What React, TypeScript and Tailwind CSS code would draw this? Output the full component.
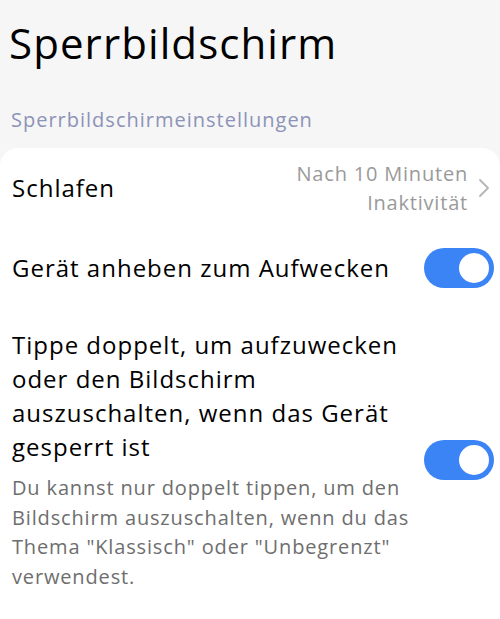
import React from "react";

function Toggle() {
  return (
    <div className="relative h-[40px] w-[70px] shrink-0 rounded-full bg-[#3b84f6]">
      <div className="absolute right-[5px] top-[5px] h-[30px] w-[30px] rounded-full bg-white" />
    </div>
  );
}

export default function App() {
  return (
    <div
      className="flex h-[619px] w-[500px] flex-col overflow-hidden bg-[#f6f6f6]"
      style={{ fontFamily: "'Open Sans', 'Noto Sans', sans-serif" }}
    >
      <h1 className="pl-[9px] pt-[15px] text-[42px] leading-[56px] tracking-[1.1px] text-black">Sperrbildschirm</h1>
      <div className="pl-[11px] pt-[35px] text-[20px] leading-[28px] tracking-[1px] text-[#8c93b8]">
        Sperrbildschirmeinstellungen
      </div>
      <div className="mt-[14px] flex flex-1 flex-col rounded-t-[18px] bg-white">
        <div className="flex h-[80px] items-center justify-between pl-[12px] pr-[8px]">
          <span className="text-[24px] tracking-[1px] text-black">Schlafen</span>
          <div className="flex items-center gap-[10px]">
            <span className="text-right text-[20px] leading-[29px] tracking-[0.8px] text-[#9a9a9a]">
              Nach 10 Minuten
              <br />
              Inaktivität
            </span>
            <svg width="12" height="20" viewBox="0 0 12 20" className="mr-[2px]">
              <path d="M2 2 L10 10 L2 18" fill="none" stroke="#b5b5b5" strokeWidth="1.8" strokeLinecap="round" strokeLinejoin="round" />
            </svg>
          </div>
        </div>
        <div className="flex h-[80px] items-center justify-between pl-[12px] pr-[6px]">
          <span className="text-[24px] tracking-[1px] text-black">Gerät anheben zum Aufwecken</span>
          <Toggle />
        </div>
        <div className="flex items-center justify-between pl-[12px] pr-[6px] pt-[20px]">
          <div className="w-[410px]">
            <div className="text-[24px] leading-[34px] tracking-[1px] text-black">
              Tippe doppelt, um aufzuwecken oder den Bildschirm auszuschalten, wenn das Gerät gesperrt ist
            </div>
            <div className="mt-[9px] text-[20px] leading-[29.5px] tracking-[0.85px] text-[#6e6e6e]">
              Du kannst nur doppelt tippen, um den Bildschirm auszuschalten, wenn du das Thema "Klassisch" oder "Unbegrenzt" verwendest.
            </div>
          </div>
          <Toggle />
        </div>
      </div>
    </div>
  );
}
